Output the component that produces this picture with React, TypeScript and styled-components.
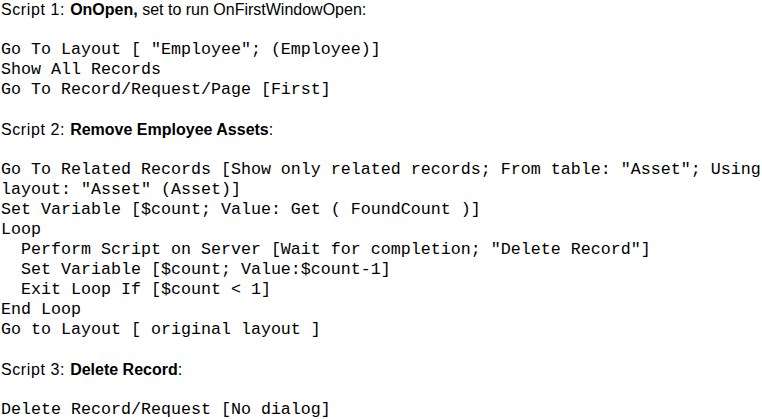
import React from "react";
import styled, { createGlobalStyle } from "styled-components";

const Global = createGlobalStyle`
  html, body { margin: 0; padding: 0; background: #ffffff; }
  body { color: #000000; }
`;

const Page = styled.div`
  display: flex;
  flex-direction: column;
  gap: 20px;
  padding: 0 0 0 1px;
  width: 762px;
  box-sizing: border-box;
`;

const Section = styled.section`
  display: flex;
  flex-direction: column;
  gap: 20px;
`;

const Heading = styled.div`
  font-family: "Liberation Sans", Arial, sans-serif;
  font-size: 16px;
  line-height: 20px;
  height: 20px;
  white-space: nowrap;
`;

const Label = styled.span`
  letter-spacing: 0.6px;
`;

const Strong = styled.b`
  font-weight: 700;
`;

const Code = styled.pre`
  margin: 0;
  font-family: "Liberation Mono", "Courier New", monospace;
  font-size: 16.67px;
  line-height: 20px;
  white-space: pre;
`;

const scripts: { n: number; name: string; tail: string; code: string }[] = [
  {
    n: 1,
    name: "OnOpen,",
    tail: " set to run OnFirstWindowOpen:",
    code: `Go To Layout [ "Employee"; (Employee)]
Show All Records
Go To Record/Request/Page [First]`,
  },
  {
    n: 2,
    name: "Remove Employee Assets",
    tail: ":",
    code: `Go To Related Records [Show only related records; From table: "Asset"; Using
layout: "Asset" (Asset)]
Set Variable [$count; Value: Get ( FoundCount )]
Loop
  Perform Script on Server [Wait for completion; "Delete Record"]
  Set Variable [$count; Value:$count-1]
  Exit Loop If [$count < 1]
End Loop
Go to Layout [ original layout ]`,
  },
  {
    n: 3,
    name: "Delete Record",
    tail: ":",
    code: `Delete Record/Request [No dialog]`,
  },
];

export default function App() {
  return (
    <>
      <Global />
      <Page>
        {scripts.map((s) => (
          <Section key={s.n}>
            <Heading>
              <Label>Script {s.n}: </Label>
              <Strong>{s.name}</Strong>
              {s.tail}
            </Heading>
            <Code>{s.code}</Code>
          </Section>
        ))}
      </Page>
    </>
  );
}
